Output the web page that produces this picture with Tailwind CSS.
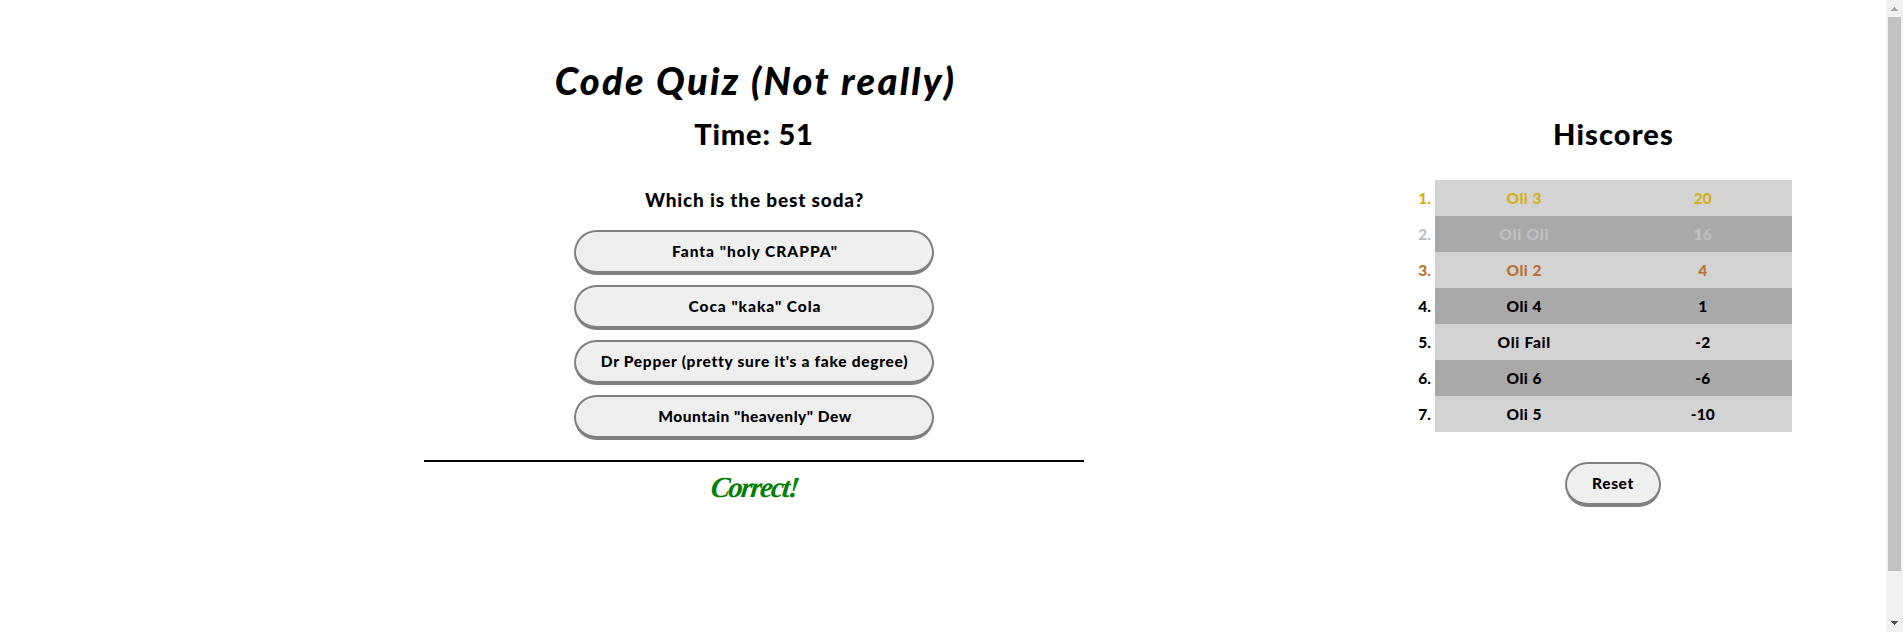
<!DOCTYPE html>
<html lang="en">
<head>
<meta charset="utf-8">
<title>Code Quiz</title>
<script src="https://cdn.jsdelivr.net/npm/@tailwindcss/browser@4"></script>
</head>
<body class="h-[632px] overflow-hidden bg-white font-['Gill_Sans_MT','Lato',sans-serif] font-black text-black">
<div class="flex h-full">
  <main class="ml-[424px] flex w-[660px] flex-col items-center pt-[55px] text-center">
    <h1 class="h-[50px] pl-[3px] text-[38px] leading-[50px] tracking-[2.25px] italic">Code Quiz (Not really)</h1>
    <h2 class="mt-[9px] h-[40px] text-[29px] leading-[40px] tracking-[0.8px]">Time: 51</h2>
    <h3 class="mt-[32px] h-[28px] pl-px text-[19px] leading-[28px] tracking-[0.83px]">Which is the best soda?</h3>
    <div class="mt-[16px] flex w-[360px] flex-col gap-[10px] text-[15.5px]">
      <button class="h-[45px] rounded-[23px] border-2 border-b-4 border-[#808080] bg-[#efefef] pl-[2px] tracking-[0.98px]">Fanta "holy CRAPPA"</button>
      <button class="h-[45px] rounded-[23px] border-2 border-b-4 border-[#808080] bg-[#efefef] pl-[2px] tracking-[0.95px]">Coca "kaka" Cola</button>
      <button class="h-[45px] rounded-[23px] border-2 border-b-4 border-[#808080] bg-[#efefef] pl-px tracking-[0.71px] whitespace-nowrap">Dr Pepper (pretty sure it's a fake degree)</button>
      <button class="h-[45px] rounded-[23px] border-2 border-b-4 border-[#808080] bg-[#efefef] pl-[2px] tracking-[0.5px]">Mountain "heavenly" Dew</button>
    </div>
    <hr class="mt-[20px] w-full border-t-2 border-black">
    <p class="mt-[7px] h-[36px] -skew-x-6 pl-[1px] font-['Brush_Script_MT','Liberation_Serif',serif] text-[29px] leading-[36px] font-bold tracking-[-1.8px] text-[#008000] italic">Correct!</p>
  </main>
  <aside class="ml-[319px] flex w-[389px] flex-col pt-[114px] text-center text-[15.5px]">
    <h2 class="ml-[32px] h-[40px] text-[29px] leading-[40px] tracking-[1.1px]">Hiscores</h2>
    <ol class="mt-[26px] flex flex-col leading-[36px]">
      <li class="flex h-[36px] text-[#d4af19]"><span class="w-[32px] pr-1 text-right">1.</span><span class="flex-1 bg-[#d3d3d3] tracking-[0.5px]">Oli 3</span><span class="flex-1 bg-[#d3d3d3]">20</span></li>
      <li class="flex h-[36px] text-[#c0c0c0]"><span class="w-[32px] pr-1 text-right">2.</span><span class="flex-1 bg-[#a9a9a9] tracking-[0.8px]">Oli Oli</span><span class="flex-1 bg-[#a9a9a9]">16</span></li>
      <li class="flex h-[36px] text-[#b87333]"><span class="w-[32px] pr-1 text-right">3.</span><span class="flex-1 bg-[#d3d3d3] tracking-[0.5px]">Oli 2</span><span class="flex-1 bg-[#d3d3d3]">4</span></li>
      <li class="flex h-[36px]"><span class="w-[32px] pr-1 text-right">4.</span><span class="flex-1 bg-[#a9a9a9] tracking-[0.5px]">Oli 4</span><span class="flex-1 bg-[#a9a9a9]">1</span></li>
      <li class="flex h-[36px]"><span class="w-[32px] pr-1 text-right">5.</span><span class="flex-1 bg-[#d3d3d3] tracking-[0.7px]">Oli Fail</span><span class="flex-1 bg-[#d3d3d3]">-2</span></li>
      <li class="flex h-[36px]"><span class="w-[32px] pr-1 text-right">6.</span><span class="flex-1 bg-[#a9a9a9] tracking-[0.5px]">Oli 6</span><span class="flex-1 bg-[#a9a9a9]">-6</span></li>
      <li class="flex h-[36px]"><span class="w-[32px] pr-1 text-right">7.</span><span class="flex-1 bg-[#d3d3d3] tracking-[0.5px]">Oli 5</span><span class="flex-1 bg-[#d3d3d3]">-10</span></li>
    </ol>
    <div class="mt-[30px] ml-[31px] flex justify-center">
      <button class="h-[45px] w-[96px] rounded-[23px] border-2 border-b-4 border-[#808080] bg-[#efefef] tracking-[0.6px]">Reset</button>
    </div>
  </aside>
  <div class="ml-auto flex w-[17px] flex-col items-center bg-[#f1f1f1]">
    <svg class="h-[17px] w-[17px]" viewBox="0 0 17 17" shape-rendering="crispEdges"><path d="M8 7h1v1h1v1h1v1h1v1H5v-1h1V9h1V8h1z" fill="#a3a3a3"/></svg>
    <div class="h-[554px] w-[13px] bg-[#c1c1c1]"></div>
    <svg class="mt-auto h-[17px] w-[17px]" viewBox="0 0 17 17" shape-rendering="crispEdges"><path d="M5 6h7v1h-1v1h-1v1H9v1H8V9H7V8H6V7H5z" fill="#505050"/></svg>
  </div>
</div>
</body>
</html>
